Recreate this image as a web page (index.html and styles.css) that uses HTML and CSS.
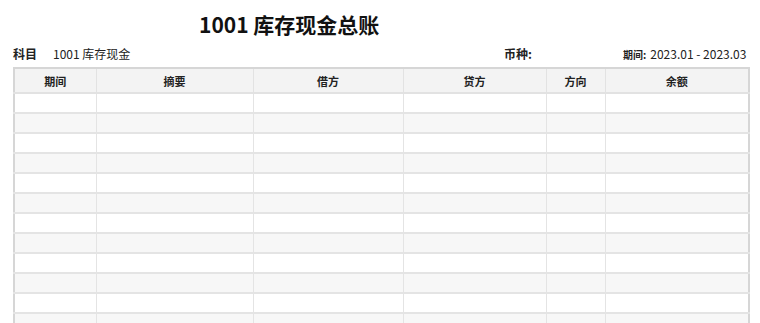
FILE: index.html
```html
<!DOCTYPE html>
<html lang="zh">
<head>
<meta charset="utf-8">
<link rel="stylesheet" href="styles.css">
</head>
<body>
<div class="page">
  <h1 class="title">1001 库存现金总账</h1>
  <div class="info">
    <div class="info-left"><span class="label">科目</span><span class="value">1001 库存现金</span></div>
    <div class="info-cur"><span class="label">币种:</span></div>
    <div class="info-period"><span class="label small">期间:</span><span class="value">2023.01 - 2023.03</span></div>
  </div>
  <table class="ledger">
    <colgroup>
      <col class="c1"><col class="c2"><col class="c3"><col class="c4"><col class="c5"><col class="c6">
    </colgroup>
    <thead>
      <tr><th>期间</th><th>摘要</th><th>借方</th><th>贷方</th><th>方向</th><th>余额</th></tr>
    </thead>
    <tbody>
      <tr><td></td><td></td><td></td><td></td><td></td><td></td></tr>
      <tr><td></td><td></td><td></td><td></td><td></td><td></td></tr>
      <tr><td></td><td></td><td></td><td></td><td></td><td></td></tr>
      <tr><td></td><td></td><td></td><td></td><td></td><td></td></tr>
      <tr><td></td><td></td><td></td><td></td><td></td><td></td></tr>
      <tr><td></td><td></td><td></td><td></td><td></td><td></td></tr>
      <tr><td></td><td></td><td></td><td></td><td></td><td></td></tr>
      <tr><td></td><td></td><td></td><td></td><td></td><td></td></tr>
      <tr><td></td><td></td><td></td><td></td><td></td><td></td></tr>
      <tr><td></td><td></td><td></td><td></td><td></td><td></td></tr>
      <tr><td></td><td></td><td></td><td></td><td></td><td></td></tr>
      <tr><td></td><td></td><td></td><td></td><td></td><td></td></tr>
      <tr><td></td><td></td><td></td><td></td><td></td><td></td></tr>
    </tbody>
  </table>
</div>
</body>
</html>
```
FILE: styles.css
```css
html, body {
  margin: 0;
  padding: 0;
  background: #fff;
  overflow: hidden;
}
body {
  font-family: "Noto Sans CJK SC", "Noto Sans", sans-serif;
  color: #222;
}
.page {
  padding: 0 10px 0 13px;
}
.title {
  margin: 0;
  padding: 10px 0 0 186px;
  height: 34px;
  font-size: 21px;
  line-height: 28px;
  font-weight: 700;
  color: #111;
}
.info {
  display: flex;
  align-items: center;
  height: 18px;
  margin-top: 1px;
  margin-bottom: 4px;
  font-size: 12px;
  line-height: 18px;
}
.info-left {
  width: 491px;
  display: flex;
}
.info-left .value {
  margin-left: 16px;
}
.label {
  font-weight: 700;
}
.label.small {
  font-size: 10px;
}
.info-cur {
  width: 119px;
}
.info-period .value {
  margin-left: 4px;
}
.ledger {
  border-collapse: collapse;
  table-layout: fixed;
  width: 735px;
  border: 2px solid #d6d6d6;
}
.c1 { width: 82px; }
.c2 { width: 157px; }
.c3 { width: 150px; }
.c4 { width: 143px; }
.c5 { width: 59px; }
.c6 { width: 144px; }
.ledger th {
  height: 23px;
  padding: 0;
  background: #f3f3f3;
  font-size: 11px;
  font-weight: 700;
  color: #222;
  border: 1px solid #e2e2e2;
  border-top: 2px solid #d6d6d6;
  border-bottom: 2px solid #e2e2e2;
}
.ledger td {
  height: 18px;
  padding: 0;
  border: 1px solid #e4e4e4;
  border-bottom: 2px solid #e4e4e4;
}
.ledger tbody tr:nth-child(even) td {
  background: #f7f7f7;
}
```
